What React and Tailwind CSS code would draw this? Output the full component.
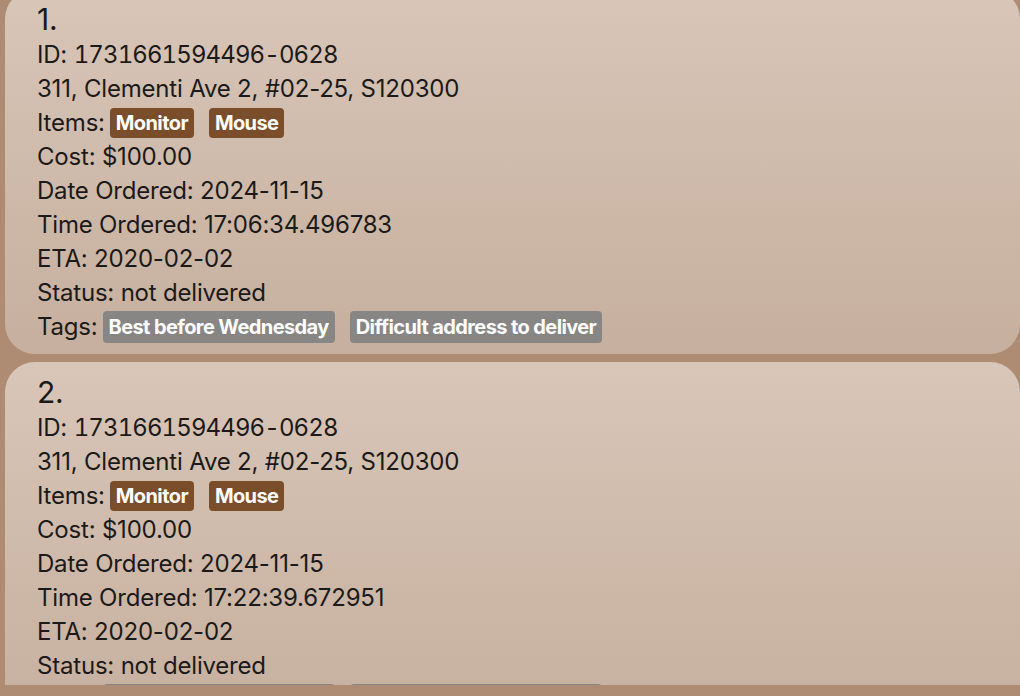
const orders = [
  {
    no: 1,
    id: "1731661594496-0628",
    address: "311, Clementi Ave 2, #02-25, S120300",
    items: ["Monitor", "Mouse"],
    cost: "$100.00",
    date: "2024-11-15",
    time: "17:06:34.496783",
    eta: "2020-02-02",
    status: "not delivered",
    tags: ["Best before Wednesday", "Difficult address to deliver"],
  },
  {
    no: 2,
    id: "1731661594496-0628",
    address: "311, Clementi Ave 2, #02-25, S120300",
    items: ["Monitor", "Mouse"],
    cost: "$100.00",
    date: "2024-11-15",
    time: "17:22:39.672951",
    eta: "2020-02-02",
    status: "not delivered",
    tags: ["Best before Wednesday", "Difficult address to deliver"],
  },
];

function Line({ children }) {
  return <div className="h-[34px] flex items-center whitespace-nowrap">{children}</div>;
}

function OrderCard({ order }) {
  return (
    <div className="w-[1015px] shrink-0 rounded-[30px] bg-gradient-to-b from-[#d8c6b8] to-[#c6af9e] pl-8 pt-[11px] pb-[10px] text-[#1c1a18] text-[24px] tracking-[-0.2px]">
      <div className="h-[38px] flex items-center text-[30px]">{order.no}.</div>
      <Line>
        ID:&nbsp;<span className="tabular-nums tracking-[-0.9px]">{order.id}</span>
      </Line>
      <Line>{order.address}</Line>
      <Line>
        Items:
        <div className="flex gap-[15px] ml-[5px]">
          {order.items.map((it) => (
            <span
              key={it}
              className="h-[30px] flex items-center px-[6px] rounded-[4px] bg-[#7a4e2b] text-white font-bold text-[20px] tracking-[-0.6px]"
            >
              {it}
            </span>
          ))}
        </div>
      </Line>
      <Line>Cost: {order.cost}</Line>
      <Line>Date Ordered: {order.date}</Line>
      <Line>Time Ordered: {order.time}</Line>
      <Line>ETA: {order.eta}</Line>
      <Line>Status: {order.status}</Line>
      <Line>
        Tags:
        <div className="flex gap-[15px] ml-[5px]">
          {order.tags.map((t) => (
            <span
              key={t}
              className="h-[32px] flex items-center px-[6px] rounded-[4px] bg-[#878685] text-white font-bold text-[20px] tracking-[-0.6px]"
            >
              {t}
            </span>
          ))}
        </div>
      </Line>
    </div>
  );
}

export default function App() {
  return (
    <div className="w-[1020px] h-[696px] bg-[#ae8c73] overflow-hidden font-['Inter',sans-serif]">
      <div className="h-[685px] overflow-hidden pl-[5px]">
        <div className="-mt-[11px] flex flex-col gap-2">
          {orders.map((o) => (
            <OrderCard key={o.no} order={o} />
          ))}
        </div>
      </div>
    </div>
  );
}
